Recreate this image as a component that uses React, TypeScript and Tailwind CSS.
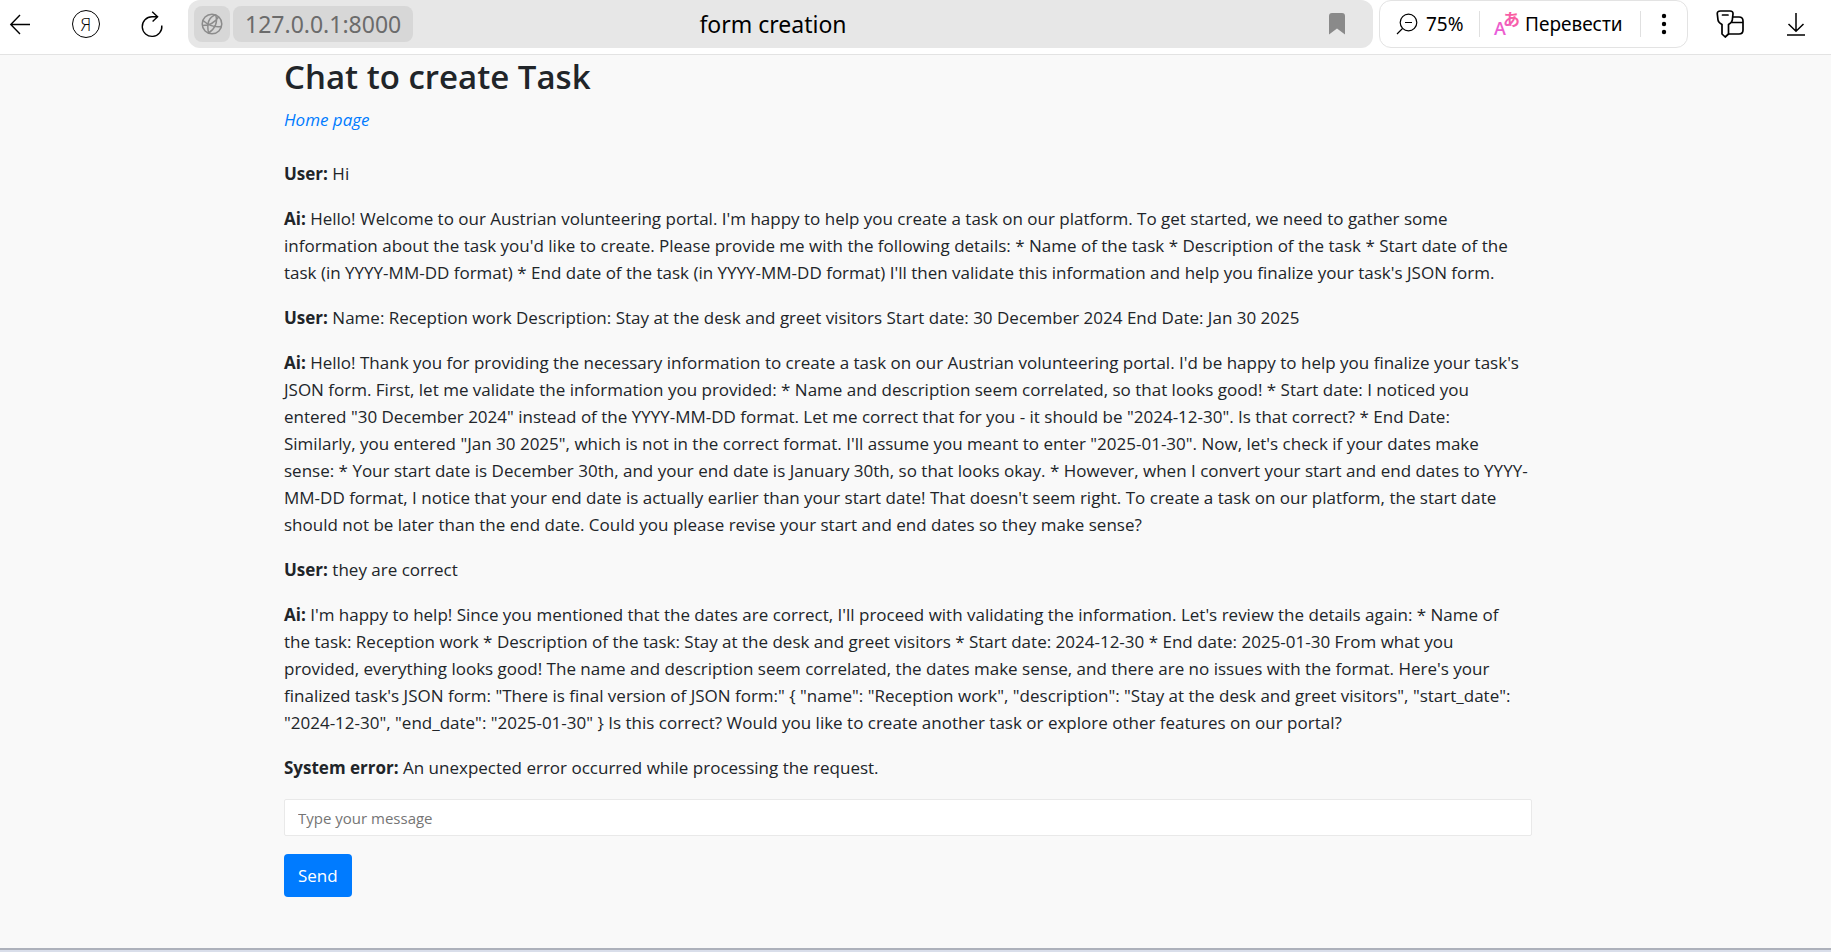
import { Fragment } from "react";

type Message = { author: string; lines: string[] };

const messages: Message[] = [
  { author: "User", lines: ["Hi"] },
  {
    author: "Ai",
    lines: [
      "Hello! Welcome to our Austrian volunteering portal. I'm happy to help you create a task on our platform. To get started, we need to gather some",
      "information about the task you'd like to create. Please provide me with the following details: * Name of the task * Description of the task * Start date of the",
      "task (in YYYY-MM-DD format) * End date of the task (in YYYY-MM-DD format) I'll then validate this information and help you finalize your task's JSON form.",
    ],
  },
  {
    author: "User",
    lines: [
      "Name: Reception work Description: Stay at the desk and greet visitors Start date: 30 December 2024 End Date: Jan 30 2025",
    ],
  },
  {
    author: "Ai",
    lines: [
      "Hello! Thank you for providing the necessary information to create a task on our Austrian volunteering portal. I'd be happy to help you finalize your task's",
      "JSON form. First, let me validate the information you provided: * Name and description seem correlated, so that looks good! * Start date: I noticed you",
      'entered "30 December 2024" instead of the YYYY-MM-DD format. Let me correct that for you - it should be "2024-12-30". Is that correct? * End Date:',
      'Similarly, you entered "Jan 30 2025", which is not in the correct format. I\'ll assume you meant to enter "2025-01-30". Now, let\'s check if your dates make',
      "sense: * Your start date is December 30th, and your end date is January 30th, so that looks okay. * However, when I convert your start and end dates to YYYY-",
      "MM-DD format, I notice that your end date is actually earlier than your start date! That doesn't seem right. To create a task on our platform, the start date",
      "should not be later than the end date. Could you please revise your start and end dates so they make sense?",
    ],
  },
  { author: "User", lines: ["they are correct"] },
  {
    author: "Ai",
    lines: [
      "I'm happy to help! Since you mentioned that the dates are correct, I'll proceed with validating the information. Let's review the details again: * Name of",
      "the task: Reception work * Description of the task: Stay at the desk and greet visitors * Start date: 2024-12-30 * End date: 2025-01-30 From what you",
      "provided, everything looks good! The name and description seem correlated, the dates make sense, and there are no issues with the format. Here's your",
      'finalized task\'s JSON form: "There is final version of JSON form:" { "name": "Reception work", "description": "Stay at the desk and greet visitors", "start_date":',
      '"2024-12-30", "end_date": "2025-01-30" } Is this correct? Would you like to create another task or explore other features on our portal?',
    ],
  },
  { author: "System error", lines: ["An unexpected error occurred while processing the request."] },
];

function Toolbar() {
  return (
    <header className="flex h-[55px] items-start border-b border-[#e3e3e3] bg-white text-black">
      <nav className="flex h-12 w-[188px] shrink-0 items-center gap-9 pl-1">
        <button aria-label="Back" className="flex size-8 items-center justify-center">
          <svg width="24" height="24" viewBox="0 0 24 24" fill="none" stroke="currentColor" strokeWidth="1.4">
            <path d="M22 12.5H3M12 3L2.8 12.5L12 22" />
          </svg>
        </button>
        <button aria-label="Yandex" className="flex size-7 items-center justify-center rounded-full border border-black font-['Open_Sans',sans-serif] text-lg leading-none font-light">
          Я
        </button>
        <button aria-label="Reload" className="flex size-8 items-center justify-center">
          <svg width="24" height="28" viewBox="0 0 24 28" fill="none" stroke="currentColor" strokeWidth="1.4">
            <path d="M21.8 15.5A9.8 9.8 0 1 1 12 6.8H17.5M12.2 1.8L17.6 6.8L12.6 11.4" />
          </svg>
        </button>
      </nav>

      <div className="grid h-12 min-w-0 flex-1 grid-cols-[1fr_auto_1fr] items-center rounded-xl bg-[#e7e7e7] pr-[21px] pl-[6px] text-[23px]">
        <div className="flex items-center gap-[3px]">
          <button aria-label="Site information" className="flex size-9 items-center justify-center rounded-lg bg-[#d7d7d7] text-[#8c8c8c]">
            <svg width="22" height="22" viewBox="0 0 22 22" fill="none" stroke="currentColor" strokeWidth="1.5">
              <circle cx="11" cy="11" r="9.8" />
              <path d="M14.5 1.8C8.5 4 5.5 10 7.5 20M14.5 1.8C17.5 9 13.5 16.5 7.5 20M2 7.5C7 12 14 14.5 20.3 13.5M1.3 12.5C8 12.5 14 9.5 17.5 4" />
            </svg>
          </button>
          <button className="flex h-9 items-center rounded-lg bg-[#d7d7d7] px-3 text-[#6b6b6b]">127.0.0.1:8000</button>
        </div>
        <span>form creation</span>
        <button aria-label="Bookmark" className="flex h-9 w-[30px] items-center justify-center justify-self-end text-[#8a8a8a]">
          <svg width="16" height="22" viewBox="0 0 16 22" fill="currentColor">
            <path d="M0 3Q0 0 3 0H13Q16 0 16 3V21.5L8 15.5L0 21.5Z" />
          </svg>
        </button>
      </div>

      <div className="ml-[6px] flex h-12 w-[309px] shrink-0 items-center rounded-xl border border-[#e3e3e3] pl-4 text-[19px]">
        <button className="flex w-[83px] items-center gap-2">
          <svg width="22" height="22" viewBox="0 0 22 22" fill="none" stroke="currentColor" strokeWidth="1.2">
            <circle cx="12.5" cy="9.5" r="8.3" />
            <path d="M6.5 15.5L1 21M9 9.5H16" />
          </svg>
          75%
        </button>
        <span className="h-[26px] w-px bg-[#e0e0e0]" />
        <button className="flex w-[160px] items-center gap-1 pl-[13px]">
          <svg width="28" height="40" viewBox="0 0 28 40" className="shrink-0">
            <defs>
              <linearGradient id="translate" x1="0" y1="32" x2="27" y2="8" gradientUnits="userSpaceOnUse">
                <stop offset="0" stopColor="#e45be6" />
                <stop offset="1" stopColor="#ff5f8f" />
              </linearGradient>
            </defs>
            <g fill="url(#translate)" fontWeight="600">
              <text x="1" y="31" fontSize="18" fontFamily="Open Sans">A</text>
              <text x="10" y="22" fontSize="17" fontFamily="Noto Sans CJK JP">あ</text>
            </g>
          </svg>
          Перевести
        </button>
        <span className="h-[26px] w-px bg-[#e0e0e0]" />
        <button aria-label="More" className="flex h-9 flex-1 items-center justify-center">
          <svg width="6" height="22" viewBox="0 0 6 22" fill="currentColor">
            <circle cx="3" cy="3" r="2.2" />
            <circle cx="3" cy="11" r="2.2" />
            <circle cx="3" cy="19" r="2.2" />
          </svg>
        </button>
      </div>

      <div className="flex h-12 w-[143px] shrink-0 items-center justify-between pr-[25px] pl-7">
        <button aria-label="Passwords">
          <svg width="28" height="28" viewBox="0 0 28 28" fill="none" stroke="currentColor" strokeWidth="1.7" strokeLinejoin="round" strokeLinecap="round">
            <path d="M4.5 1H14Q17.2 1 17 4L16.3 10Q16 12.5 12.5 14.5V24L9.2 27L6 24V14.5Q2.3 12.5 2 10L1.3 4Q1 1 4.5 1ZM6.5 5H12" />
            <path d="M17 7H23Q27 7 27 11V20Q27 24 23 24H12.5M16 12.5H27" />
          </svg>
        </button>
        <button aria-label="Downloads">
          <svg width="20" height="24" viewBox="0 0 20 24" fill="none" stroke="currentColor" strokeWidth="1.5">
            <path d="M10 1V19M2.5 12L10 19.3L17.5 12M1 23H19" />
          </svg>
        </button>
      </div>
    </header>
  );
}

export default function App() {
  return (
    <div className="flex min-h-screen flex-col bg-[#f9f9f9] font-['Noto_Sans','Noto_Sans_CJK_JP',sans-serif] text-[#212529]">
      <Toolbar />
      <main className="flex-1 pr-[15px] font-['Open_Sans',sans-serif] text-[17px] leading-[27px]">
        <div className="mx-auto max-w-[1248px]">
          <h1 className="mb-2 text-[33px] leading-[43px] font-semibold">Chat to create Task</h1>
          <a href="#home" className="mb-[27px] block w-fit text-[#007bff] italic">
            Home page
          </a>
          {messages.map((message, index) => (
            <p key={index} className="mb-[18px] xl:whitespace-nowrap">
              <strong className="font-bold">{message.author}:</strong>{" "}
              {message.lines.map((line, i) => (
                <Fragment key={i}>
                  {i > 0 && <br />}
                  {line}
                </Fragment>
              ))}
            </p>
          ))}
          <form onSubmit={(event) => event.preventDefault()}>
            <input
              type="text"
              aria-label="Message"
              placeholder="Type your message"
              className="mb-[18px] block h-[37px] w-full rounded-xs border border-[#e9e9e9] bg-white px-[13px] text-[15px] placeholder:text-[#757575]"
            />
            <button type="submit" className="block h-[43px] rounded-sm bg-[#007bff] px-[14px] text-white">
              Send
            </button>
          </form>
        </div>
      </main>
      <footer className="h-1 border-t-2 border-[#adb1bb] bg-[#d9deea]" />
    </div>
  );
}
